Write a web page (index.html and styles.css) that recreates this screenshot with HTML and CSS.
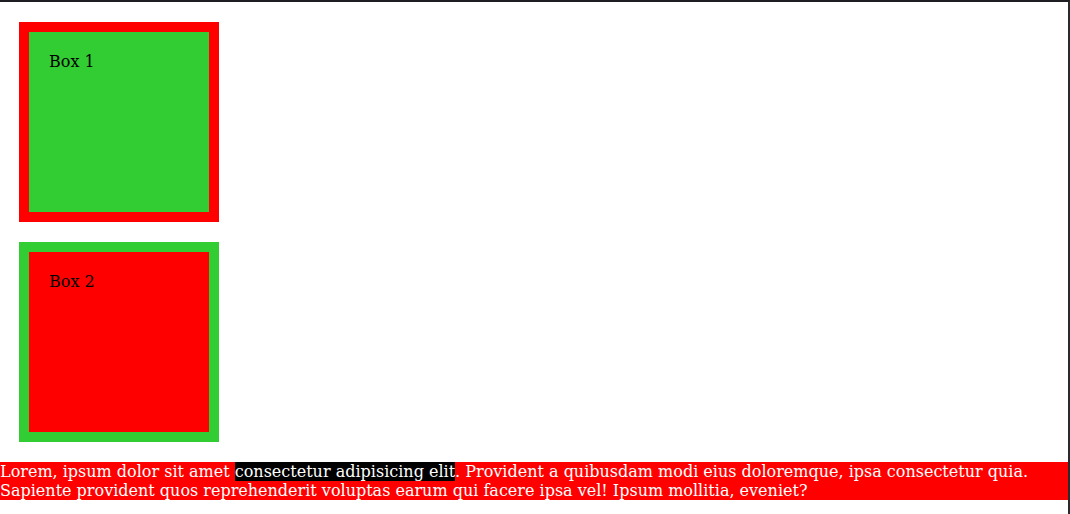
FILE: index.html
```html
<!DOCTYPE html>
<html>
<head>
<meta charset="utf-8">
<link rel="stylesheet" href="styles.css">
</head>
<body>
<div class="page">
  <div class="box box-one">Box 1</div>
  <div class="box box-two">Box 2</div>
  <p class="lorem">Lorem, ipsum dolor sit amet <span class="hl">consectetur adipisicing elit</span>. Provident a quibusdam modi eius doloremque, ipsa consectetur quia. Sapiente provident quos reprehenderit voluptas earum qui facere ipsa vel! Ipsum mollitia, eveniet?</p>
</div>
</body>
</html>
```
FILE: styles.css
```css
html, body {
  margin: 0;
  padding: 0;
  background: #fff;
}
body {
  font-family: "DejaVu Serif", serif;
  font-size: 16px;
  width: 1070px;
  height: 514px;
  overflow: hidden;
}
.page {
  box-sizing: border-box;
  width: 1070px;
  height: 514px;
  border-top: 2px solid #1e1e22;
  border-right: 2px solid #2a2a2e;
  overflow: hidden;
}
.box {
  box-sizing: border-box;
  width: 200px;
  height: 200px;
  margin: 20px 0 20px 19px;
  padding: 20px;
  border: 10px solid;
  color: #000;
}
.box-one {
  background: #32cd32;
  border-color: #ff0000;
}
.box-two {
  background: #ff0000;
  border-color: #32cd32;
}
.lorem {
  margin: 0;
  background: #ff0000;
  color: #fff;
}
.hl {
  background: #000;
}
```
